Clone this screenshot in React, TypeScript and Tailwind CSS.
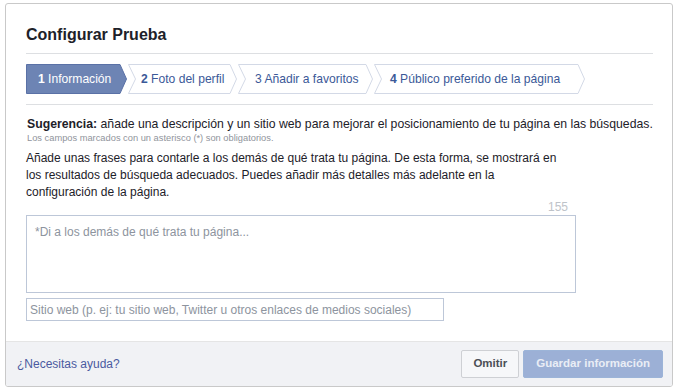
import React from "react";

const font = { fontFamily: '"Liberation Sans", Arial, sans-serif' };

function Step({
  width,
  first,
  num,
  label,
  numBold,
  pl,
}: {
  width: number;
  first?: boolean;
  num: string;
  label: string;
  numBold?: boolean;
  pl: string;
}) {
  const d = 7;
  const pts = first
    ? `0.5,0.5 ${width - d},0.5 ${width - 0.5},15 ${width - d},29.5 0.5,29.5`
    : `0.5,0.5 ${width - d},0.5 ${width - 0.5},15 ${width - d},29.5 0.5,29.5 ${d + 0.5},15`;
  return (
    <div className="relative h-[30px] flex items-center shrink-0" style={{ width }}>
      <svg className="absolute inset-0" width={width} height={30}>
        <polygon
          points={pts}
          fill={first ? "#6d84b4" : "#ffffff"}
          stroke={first ? "#5a71a6" : "#d3d9e6"}
          strokeWidth={1}
        />
      </svg>
      <span
        className={`relative text-[12.1px] leading-[16px] whitespace-nowrap ${pl} ${
          first ? "text-white" : "text-[#3b5998]"
        }`}
      >
        <span className={numBold ? "font-bold" : ""}>{num}</span> {label}
      </span>
    </div>
  );
}

export default function App() {
  return (
    <div className="w-[680px] h-[392px] bg-white pt-[3px] pl-[5px]" style={font}>
      <div className="w-[668px] h-[384px] border border-[#c9c9c9] rounded-[3px] flex flex-col overflow-hidden">
        <div className="pl-[20px] pr-[19px] pt-[21px]">
          <div className="pb-[8px] border-b border-[#dddfe2]">
            <h1 className="text-[16px] leading-[20px] font-bold text-[#1d2129]">Configurar Prueba</h1>
          </div>
          <div className="pt-[10px] pb-[10px] border-b border-[#dddfe2]">
            <div className="flex gap-[1px]">
              <Step width={101} first num="1" label="Información" numBold pl="pl-[12px]" />
              <Step width={109} num="2" label="Foto del perfil" numBold pl="pl-[13px]" />
              <Step width={135} num="3" label="Añadir a favoritos" pl="pl-[17px]" />
              <Step width={211} num="4" label="Público preferido de la página" numBold pl="pl-[16px]" />
            </div>
          </div>
          <div className="pt-[11px] pl-[1px]">
            <p className="text-[12.25px] leading-[16px] text-[#1d2129] whitespace-nowrap">
              <span className="font-bold">Sugerencia:</span> añade una descripción y un sitio web para
              mejorar el posicionamiento de tu página en las búsquedas.
            </p>
            <p className="text-[9.3px] leading-[12px] text-[#90949c] whitespace-nowrap">
              Los campos marcados con un asterisco (*) son obligatorios.
            </p>
          </div>
          <p className="mt-[6px] w-[540px] text-[12px] leading-[17px] text-[#1d2129]">
            Añade unas frases para contarle a los demás de qué trata tu página. De esta forma, se
            mostrará en los resultados de búsqueda adecuados. Puedes añadir más detalles más adelante
            en la configuración de la página.
          </p>
          <div className="w-[550px] text-right pr-[8px] text-[12px] leading-[13px] text-[#bec3c9]">155</div>
          <textarea
            className="mt-[1px] block w-[550px] h-[78px] border border-[#bdc7d8] p-[8px] text-[12px] leading-[16px] resize-none outline-none placeholder:text-[#8d949e]"
            style={font}
            placeholder="*Di a los demás de qué trata tu página..."
          />
          <input
            className="mt-[5px] block w-[418px] h-[23px] border border-[#bdc7d8] px-[3px] text-[12px] outline-none placeholder:text-[#8d949e]"
            style={font}
            placeholder="Sitio web (p. ej: tu sitio web, Twitter u otros enlaces de medios sociales)"
          />
        </div>
        <div className="mt-auto h-[45px] border-t border-[#e5e5e5] bg-[#f1f2f5] flex items-center justify-between pl-[11px] pr-[9px]">
          <span className="text-[12px] text-[#4b5aa0]">¿Necesitas ayuda?</span>
          <div className="flex gap-[4px]">
            <button className="h-[28px] px-[11px] border border-[#ced0d4] rounded-[2px] bg-[#f6f7f9] text-[11.5px] font-bold text-[#4b4f56]">
              Omitir
            </button>
            <button className="h-[28px] px-[12px] border border-[#9cb4d8] rounded-[2px] bg-[#9cb0d6] text-[11.5px] font-bold text-[#e9edf5]">
              Guardar información
            </button>
          </div>
        </div>
      </div>
    </div>
  );
}
